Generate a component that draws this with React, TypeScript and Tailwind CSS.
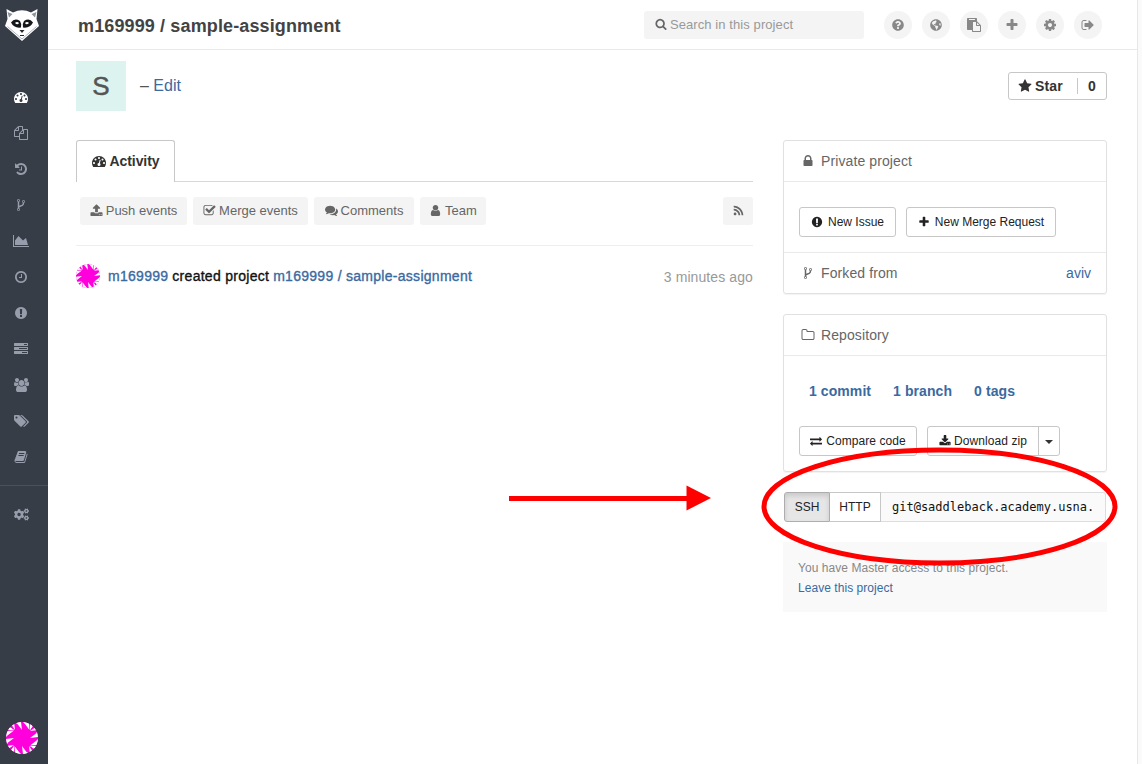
import React from "react";
import { FaCogs, FaGlobeAmericas, FaQuestionCircle, FaRss } from "react-icons/fa";

const PATHS = {
  dashboard:
    "M384 1152q0-53-37.5-90.5t-90.5-37.5-90.5 37.5-37.5 90.5 37.5 90.5 90.5 37.5 90.5-37.5 37.5-90.5zm192-448q0-53-37.5-90.5t-90.5-37.5-90.5 37.5-37.5 90.5 37.5 90.5 90.5 37.5 90.5-37.5 37.5-90.5zm428 481l101-382q6-26-7.5-48.5t-38.5-29.5-48 6.5-30 39.5l-101 382q-60 5-107 43.5t-63 98.5q-20 77 20 146t117 89 146-20 89-117q16-60-6-117t-72-91zm660-33q0-53-37.5-90.5t-90.5-37.5-90.5 37.5-37.5 90.5 37.5 90.5 90.5 37.5 90.5-37.5 37.5-90.5zm-640-640q0-53-37.5-90.5t-90.5-37.5-90.5 37.5-37.5 90.5 37.5 90.5 90.5 37.5 90.5-37.5 37.5-90.5zm448 192q0-53-37.5-90.5t-90.5-37.5-90.5 37.5-37.5 90.5 37.5 90.5 90.5 37.5 90.5-37.5 37.5-90.5zm320 448q0 261-141 483-19 29-54 29h-1402q-35 0-54-29-141-221-141-483 0-182 71-348t191-286 286-191 348-71 348 71 286 191 191 286 71 348z",
  files:
    "M1696 384q40 0 68 28t28 68v1216q0 40-28 68t-68 28h-960q-40 0-68-28t-28-68v-288h-544q-40 0-68-28t-28-68v-672q0-40 20-88t48-76l408-408q28-28 76-48t88-20h416q40 0 68 28t28 68v328q68-40 128-40h416zm-544 213l-299 299h299v-299zm-640-384l-299 299h299v-299zm196 647l316-316v-416h-384v416q0 40-28 68t-68 28h-416v640h512v-256q0-40 20-88t48-76zm956 804v-1152h-384v416q0 40-28 68t-68 28h-416v640h896z",
  history:
    "M1664 896q0 156-61 298t-164 245-245 164-298 61q-172 0-327-72.5t-264-204.5q-7-10-6.5-22.5t8.5-20.5l137-138q10-9 25-9 16 2 23 12 73 95 179 147t225 52q104 0 198.5-40.5t163.5-109.5 109.5-163.5 40.5-198.5-40.5-198.5-109.5-163.5-163.5-109.5-198.5-40.5q-98 0-188 35.5t-160 101.5l137 138q31 30 14 69-17 40-59 40h-448q-26 0-45-19t-19-45v-448q0-42 40-59 39-17 69 14l130 129q107-101 244.5-156.5t284.5-55.5q156 0 298 61t245 164 164 245 61 298zm-640-288v448q0 14-9 23t-23 9h-320q-14 0-23-9t-9-23v-64q0-14 9-23t23-9h224v-352q0-14 9-23t23-9h64q14 0 23 9t9 23z",
  fork: "M672 1472q0-40-28-68t-68-28-68 28-28 68 28 68 68 28 68-28 28-68zm0-1152q0-40-28-68t-68-28-68 28-28 68 28 68 68 28 68-28 28-68zm640 128q0-40-28-68t-68-28-68 28-28 68 28 68 68 28 68-28 28-68zm96 0q0 52-26 96.5t-70 69.5q-2 287-226 414-67 38-203 81-128 40-169.5 71t-41.5 100v26q44 25 70 69.5t26 96.5q0 80-56 136t-136 56-136-56-56-136q0-52 26-96.5t70-69.5v-820q-44-25-70-69.5t-26-96.5q0-80 56-136t136-56 136 56 56 136q0 52-26 96.5t-70 69.5v497q54-26 154-57 55-17 87.5-29.5t70.5-31 59-39.5 40.5-51 28-69.5 8.5-91.5q-44-25-70-69.5t-26-96.5q0-80 56-136t136-56 136 56 56 136z",
  area: "M2048 1536v128h-2048v-1536h128v1408h1920zm-384-1024l256 896h-1664v-576l448-576 576 576z",
  clock:
    "M1024 544v448q0 14-9 23t-23 9h-320q-14 0-23-9t-9-23v-64q0-14 9-23t23-9h224v-352q0-14 9-23t23-9h64q14 0 23 9t9 23zm416 352q0-148-73-273t-198-198-273-73-273 73-198 198-73 273 73 273 198 198 273 73 273-73 198-198 73-273zm224 0q0 209-103 385.5t-279.5 279.5-385.5 103-385.5-103-279.5-279.5-103-385.5 103-385.5 279.5-279.5 385.5-103 385.5 103 279.5 279.5 103 385.5z",
  issue:
    "M896 128q209 0 385.5 103t279.5 279.5 103 385.5-103 385.5-279.5 279.5-385.5 103-385.5-103-279.5-279.5-103-385.5 103-385.5 279.5-279.5 385.5-103zm128 1247v-190q0-14-9-23.5t-22-9.5h-192q-13 0-23 10t-10 23v190q0 13 10 23t23 10h192q13 0 22-9.5t9-23.5zm-2-344l18-621q0-12-10-18-10-8-24-8h-220q-14 0-24 8-10 6-10 18l17 621q0 10 10 17.5t24 7.5h185q14 0 23.5-7.5t10.5-17.5z",
  tasks:
    "M1024 1408h640v-128h-640v128zm-384-512h1024v-128h-1024v128zm640-512h384v-128h-384v128zm512 832v256q0 26-19 45t-45 19h-1664q-26 0-45-19t-19-45v-256q0-26 19-45t45-19h1664q26 0 45 19t19 45zm0-512v256q0 26-19 45t-45 19h-1664q-26 0-45-19t-19-45v-256q0-26 19-45t45-19h1664q26 0 45 19t19 45zm0-512v256q0 26-19 45t-45 19h-1664q-26 0-45-19t-19-45v-256q0-26 19-45t45-19h1664q26 0 45 19t19 45z",
  users:
    "M593 896q-162 5-265 128h-134q-82 0-138-40.5t-56-118.5q0-353 124-353 6 0 43.5 21t97.5 42.5 119 21.5q67 0 133-23-5 37-5 66 0 159 93 297zm1071 637q0 120-73 189.5t-194 69.5h-874q-121 0-194-69.5t-73-189.5q0-53 3.5-103.5t14-109 26.5-108.5 43-97.5 62-81 85.5-53.5 111.5-20q10 0 43 21.5t73 48 107 48 135 21.5 135-21.5 107-48 73-48 43-21.5q61 0 111.5 20t85.5 53.5 62 81 43 97.5 26.5 108.5 14 109 3.5 103.5zm-1024-1277q0 106-75 181t-181 75-181-75-75-181 75-181 181-75 181 75 75 181zm704 384q0 159-112.5 271.5t-271.5 112.5-271.5-112.5-112.5-271.5 112.5-271.5 271.5-112.5 271.5 112.5 112.5 271.5zm576 225q0 78-56 118.5t-138 40.5h-134q-103-123-265-128 93-138 93-297 0-29-5-66 66 23 133 23 59 0 119-21.5t97.5-42.5 43.5-21q124 0 124 353zm-128-609q0 106-75 181t-181 75-181-75-75-181 75-181 181-75 181 75 75 181z",
  tags: "M448 448q0-53-37.5-90.5t-90.5-37.5-90.5 37.5-37.5 90.5 37.5 90.5 90.5 37.5 90.5-37.5 37.5-90.5zm1067 576q0 53-37 90l-491 492q-39 37-91 37-53 0-90-37l-715-716q-38-37-64.5-101t-26.5-117v-416q0-52 38-90t90-38h416q53 0 117 26.5t102 64.5l715 714q37 39 37 91zm384 0q0 53-37 90l-491 492q-39 37-91 37-36 0-59-14t-53-45l470-470q37-37 37-90 0-52-37-91l-715-714q-38-38-102-64.5t-117-26.5h224q53 0 117 26.5t102 64.5l715 714q37 39 37 91z",
  book: "M1703 478q40 57 18 129l-275 906q-19 64-76.5 107.5t-122.5 43.5h-923q-77 0-148.5-53.5t-99.5-131.5q-24-67-2-127 0-4 3-27t4-37q1-8-3-21.5t-3-19.5q2-11 8-21t16.5-23.5 16.5-23.5q23-38 45-91.5t30-91.5q3-10 .5-30t-.5-28q3-11 17-28t17-23q21-36 42-92t25-90q1-9-2.5-32t.5-28q4-13 22-30.5t22-22.5q19-26 42.5-84.5t27.5-96.5q1-8-3-25.5t-2-26.5q2-8 9-18t18-23 17-21q8-12 16.5-30.5t15-35 16-36 19.5-32 26.5-23.5 36-11.5 47.5 5.5l-1 3q38-9 51-9h761q74 0 114 56t18 130l-274 906q-36 119-71.5 153.5t-128.5 34.5h-869q-27 0-38 15-11 16-1 43 24 70 144 70h923q29 0 56-15.5t35-41.5l300-987q7-22 5-57 38 15 59 43zm-1064 2q-4 13 2 22.5t20 9.5h608q13 0 25.5-9.5t16.5-22.5l21-64q4-13-2-22.5t-20-9.5h-608q-13 0-25.5 9.5t-16.5 22.5zm-83 256q-4 13 2 22.5t20 9.5h608q13 0 25.5-9.5t16.5-22.5l21-64q4-13-2-22.5t-20-9.5h-608q-13 0-25.5 9.5t-16.5 22.5z",
  paste:
    "M768 1664h896v-640h-416q-40 0-68-28t-28-68v-416h-384v1152zm256-1440v-64q0-13-9.5-22.5t-22.5-9.5h-704q-13 0-22.5 9.5t-9.5 22.5v64q0 13 9.5 22.5t22.5 9.5h704q13 0 22.5-9.5t9.5-22.5zm256 672h299l-299-299v299zm512 128v672q0 40-28 68t-68 28h-960q-40 0-68-28t-28-68v-160h-544q-40 0-68-28t-28-68v-1344q0-40 28-68t68-28h1088q40 0 68 28t28 68v328q21 13 36 28l408 408q28 28 48 76t20 88z",
  plus: "M1600 736v192q0 40-28 68t-68 28h-416v416q0 40-28 68t-68 28h-192q-40 0-68-28t-28-68v-416h-416q-40 0-68-28t-28-68v-192q0-40 28-68t68-28h416v-416q0-40 28-68t68-28h192q40 0 68 28t28 68v416h416q40 0 68 28t28 68z",
  cog: "M1152 896q0-106-75-181t-181-75-181 75-75 181 75 181 181 75 181-75 75-181zm512-109v222q0 12-8 23t-20 13l-185 28q-19 54-39 91 35 50 107 138 10 12 10 25t-9 23q-27 37-99 108t-94 71q-12 0-26-9l-138-108q-44 23-91 38-16 136-29 186-7 28-36 28h-222q-14 0-24.5-8.5t-11.5-21.5l-28-184q-49-16-90-37l-141 107q-10 9-25 9-14 0-25-11-126-114-165-168-7-10-7-23 0-12 8-23 15-21 51-66.5t54-70.5q-27-50-41-99l-183-27q-13-2-21-12.5t-8-23.5v-222q0-12 8-23t19-13l186-28q14-46 39-92-40-57-107-138-10-12-10-24 0-10 9-23 26-36 98.5-107.5t94.5-71.5q13 0 26 10l138 107q44-23 91-38 16-136 29-186 7-28 36-28h222q14 0 24.5 8.5t11.5 21.5l28 184q49 16 90 37l142-107q9-9 24-9 13 0 25 10 129 119 165 170 7 8 7 22 0 12-8 23-15 21-51 66.5t-54 70.5q26 50 41 98l183 28q13 2 21 12.5t8 23.5z",
  signout:
    "M704 1440q0 4 1 20t.5 26.5-3 23.5-10 19.5-20.5 6.5h-320q-119 0-203.5-84.5t-84.5-203.5v-704q0-119 84.5-203.5t203.5-84.5h320q13 0 22.5 9.5t9.5 22.5q0 4 1 20t.5 26.5-3 23.5-10 19.5-20.5 6.5h-320q-66 0-113 47t-47 113v704q0 66 47 113t113 47h312l11.5 1 11.5 3 8 5.5 7 9 2 13.5zm928-544q0 26-19 45l-544 544q-19 19-45 19t-45-19-19-45v-288h-448q-26 0-45-19t-19-45v-384q0-26 19-45t45-19h448v-288q0-26 19-45t45-19 45 19l544 544q19 19 19 45z",
  search:
    "M1216 832q0-185-131.5-316.5t-316.5-131.5-316.5 131.5-131.5 316.5 131.5 316.5 316.5 131.5 316.5-131.5 131.5-316.5zm512 832q0 52-38 90t-90 38q-54 0-90-38l-343-342q-179 124-399 124-143 0-273.5-55.5t-225-150-150-225-55.5-273.5 55.5-273.5 150-225 225-150 273.5-55.5 273.5 55.5 225 150 150 225 55.5 273.5q0 220-124 399l343 343q37 37 37 90z",
  star: "M1728 647q0 22-26 48l-363 354 86 500q1 7 1 20 0 21-10.5 35.5t-30.5 14.5q-19 0-40-12l-449-236-449 236q-22 12-40 12-21 0-31.5-14.5t-10.5-35.5q0-6 2-20l86-500-364-354q-25-27-25-48 0-37 56-46l502-73 225-455q19-41 49-41t49 41l225 455 502 73q56 9 56 46z",
  upload:
    "M1344 1472q0-26-19-45t-45-19-45 19-19 45 19 45 45 19 45-19 19-45zm256 0q0-26-19-45t-45-19-45 19-19 45 19 45 45 19 45-19 19-45zm128-224v320q0 40-28 68t-68 28h-1472q-40 0-68-28t-28-68v-320q0-40 28-68t68-28h427q21 56 70.5 92t110.5 36h256q61 0 110.5-36t70.5-92h427q40 0 68 28t28 68zm-325-648q-17 40-59 40h-256v448q0 26-19 45t-45 19h-256q-26 0-45-19t-19-45v-448h-256q-42 0-59-40-17-39 14-69l448-448q18-19 45-19t45 19l448 448q31 30 14 69z",
  download:
    "M1344 1344q0-26-19-45t-45-19-45 19-19 45 19 45 45 19 45-19 19-45zm256 0q0-26-19-45t-45-19-45 19-19 45 19 45 45 19 45-19 19-45zm128-224v320q0 40-28 68t-68 28h-1472q-40 0-68-28t-28-68v-320q0-40 28-68t68-28h465l135 136q58 56 136 56t136-56l136-136h464q40 0 68 28t28 68zm-325-569q17 41-14 70l-448 448q-18 19-45 19t-45-19l-448-448q-31-29-14-70 17-39 59-39h256v-448q0-26 19-45t45-19h256q26 0 45 19t19 45v448h256q42 0 59 39z",
  check:
    "M1472 930v318q0 119-84.5 203.5t-203.5 84.5h-832q-119 0-203.5-84.5t-84.5-203.5v-832q0-119 84.5-203.5t203.5-84.5h832q63 0 117 25 15 7 18 23 3 17-9 29l-49 49q-10 10-23 10-3 0-9-2-23-6-45-6h-832q-66 0-113 47t-47 113v832q0 66 47 113t113 47h832q66 0 113-47t47-113v-254q0-13 9-22l64-64q10-10 23-10 6 0 12 3 20 8 20 29zm231-489l-814 814q-24 24-57 24t-57-24l-430-430q-24-24-24-57t24-57l110-110q24-24 57-24t57 24l263 263 647-647q24-24 57-24t57 24l110 110q24 24 24 57t-24 57z",
  comments:
    "M1408 768q0 139-94 257t-256.5 186.5-353.5 68.5q-86 0-176-16-124 88-278 128-36 9-86 16h-3q-11 0-20.5-8t-11.5-21q-1-3-1-6.5t.5-6.5 2-6l2.5-5 3.5-5.5 4-5 4.5-5 4-4.5q5-6 23-25t26-29.5 22.5-29 25-38.5 20.5-44q-124-72-195-177t-71-224q0-139 94-257t256.5-186.5 353.5-68.5 353.5 68.5 256.5 186.5 94 257zm384 256q0 120-71 224.5t-195 176.5q10 24 20.5 44t25 38.5 22.5 29 26 29.5 23 25q1 1 4 4.5t4.5 5 4 5 3.5 5.5l2.5 5 2 6 .5 6.5-1 6.5q-3 14-13 22t-22 7q-50-7-86-16-154-40-278-128-90 16-176 16-271 0-472-132 58 4 88 4 161 0 309-45t264-129q125-92 192-212t67-254q0-77-23-152 129 71 204 178t75 230z",
  user: "M1536 1399q0 109-62.5 187t-150.5 78h-854q-88 0-150.5-78t-62.5-187q0-85 8.5-160.5t31.5-152 58.5-131 94-89 134.5-34.5q131 128 313 128t313-128q76 0 134.5 34.5t94 89 58.5 131 31.5 152 8.5 160.5zm-256-887q0 159-112.5 271.5t-271.5 112.5-271.5-112.5-112.5-271.5 112.5-271.5 271.5-112.5 271.5 112.5 112.5 271.5z",
  lock: "M640 768h512v-192q0-106-75-181t-181-75-181 75-75 181v192zm832 96v576q0 40-28 68t-68 28h-960q-40 0-68-28t-28-68v-576q0-40 28-68t68-28h32v-192q0-184 132-316t316-132 316 132 132 316v192h32q40 0 68 28t28 68z",
  folder:
    "M1600 1312v-704q0-40-28-68t-68-28h-704q-40 0-68-28t-28-68v-64q0-40-28-68t-68-28h-320q-40 0-68 28t-28 68v960q0 40 28 68t68 28h1216q40 0 68-28t28-68zm128-704v704q0 92-66 158t-158 66h-1216q-92 0-158-66t-66-158v-960q0-92 66-158t158-66h320q92 0 158 66t66 158v32h672q92 0 158 66t66 158z",
  exchange:
    "M1792 1184v192q0 13-9.5 22.5t-22.5 9.5h-1376v192q0 13-9.5 22.5t-22.5 9.5q-12 0-24-10l-319-320q-9-9-9-22 0-14 9-23l320-320q9-9 23-9 13 0 22.5 9.5t9.5 22.5v192h1376q13 0 22.5 9.5t9.5 22.5zm0-544q0 14-9 23l-320 320q-9 9-23 9-13 0-22.5-9.5t-9.5-22.5v-192h-1376q-13 0-22.5-9.5t-9.5-22.5v-192q0-13 9.5-22.5t22.5-9.5h1376v-192q0-14 9-23t23-9q12 0 24 10l319 319q9 9 9 23z",
};

type IconName = keyof typeof PATHS;

function Icon({ name, size = 14, className = "" }: { name: IconName; size?: number; className?: string }) {
  const unit = name === "area" ? 2048 : name === "users" || name === "tags" ? 1920 : 1792;
  return (
    <svg
      width={(size * unit) / 1792}
      height={size}
      viewBox={`0 0 ${unit} 1792`}
      fill="currentColor"
      className={`shrink-0 ${className}`}
    >
      <path d={PATHS[name]} />
    </svg>
  );
}

function Logo() {
  return (
    <svg width="36" height="34" viewBox="0 0 36 34" className="shrink-0">
      <path d="M2.5 1 3.5 11 1 18 18 33 35 18 32.5 11 33.5 1 27 4.5Q18 0 9 4.5Z" fill="#fff" />
      <path d="M3.5 4 5 9.5 8.5 6ZM32.5 4 31 9.5 27.5 6Z" fill="#8d939b" />
      <path d="M7 14.5q3.5-5 9-1.5 2 3 1 6.500-7 1-10-5zM29 14.500q-3.500-5-9-1.500-2 3-1 6.500 7 1 10-5z" fill="#15171b" />
      <path d="M11 15q2-2 4 0-1.500 2.500-4 0zM25 15q-2-2-4 0 1.500 2.500 4 0z" fill="#fff" />
      <path d="M15.500 22h5L18 25ZM16 27h4v1h-4z" fill="#24272c" />
      <path d="M3.500 18.500 18 31 32.500 18.500" stroke="#8d939b" strokeWidth=".7" fill="none" />
    </svg>
  );
}

function Identicon({ size, spike = "#fff" }: { size: number; spike?: string }) {
  return (
    <svg width={size} height={size} viewBox="0 0 32 32" className="shrink-0 rounded-full">
      <rect width="32" height="32" fill="#ff00dc" />
      {[0, 90, 180, 270].map((angle) => (
        <path
          key={angle}
          transform={`rotate(${angle} 16 16)`}
          fill={spike}
          d="M0 0H8L9 8 5 2ZM8 0H15L16 8 11.500 2ZM17 0H23L23.500 8 19 2ZM1 4 8 8 0 7ZM24 1H29L24 8Z"
        />
      ))}
    </svg>
  );
}

const NAV: IconName[] = ["dashboard", "files", "history", "fork", "area", "clock", "issue", "tasks", "users", "tags", "book"];

function Sidebar() {
  return (
    <aside className="flex w-12 shrink-0 flex-col bg-[#373d47] text-[#979dab]">
      <div className="flex h-[79px] pt-2 pl-1">
        <Logo />
      </div>
      {NAV.map((name, i) => (
        <div key={name} className={`flex h-9 w-[42px] items-center justify-center ${i === 0 ? "text-white" : ""}`}>
          <Icon name={name} />
        </div>
      ))}
      <div className="mt-[10px] border-t border-[#4a505c]" />
      <div className="mt-[10px] flex h-9 w-[42px] items-center justify-center">
        <FaCogs size={15} />
      </div>
      <div className="mt-auto mb-[10px] ml-[6px]">
        <Identicon size={32} />
      </div>
    </aside>
  );
}

function Header() {
  return (
    <header className="flex h-[50px] items-center border-b border-[#eaeaea] pr-[35px] pl-[30px]">
      <h1 className="flex-1 pt-[3px] text-[18px] font-bold tracking-[0.13px] text-[#434343]">m169999 / sample-assignment</h1>
      <div className="flex h-7 w-[220px] items-center rounded-[3px] bg-[#f4f4f4] pl-[11px] text-[#666]">
        <Icon name="search" size={12} className="mb-px" />
        <span className="ml-[3px] text-[13px] tracking-[0.08px] text-[#999]">Search in this project</span>
      </div>
      <nav className="ml-5 flex gap-[10px] text-[#888]">
        <HeaderButton><FaQuestionCircle size={12} /></HeaderButton>
        <HeaderButton><FaGlobeAmericas size={12} /></HeaderButton>
        <HeaderButton><Icon name="paste" /></HeaderButton>
        <HeaderButton><Icon name="plus" /></HeaderButton>
        <HeaderButton><Icon name="cog" /></HeaderButton>
        <HeaderButton><Icon name="signout" /></HeaderButton>
      </nav>
    </header>
  );
}

function HeaderButton({ children }: { children: React.ReactNode }) {
  return <button className="flex size-7 items-center justify-center rounded-full bg-[#f4f4f4]">{children}</button>;
}

function Filter({ icon, label, width }: { icon: IconName; label: string; width: string }) {
  return (
    <button className={`flex h-7 items-center justify-center gap-[3px] rounded-[3px] bg-[#f4f4f4] text-[13px] text-[#666] ${width}`}>
      <Icon name={icon} size={13} className="mb-px" />
      {label}
    </button>
  );
}

function Activity() {
  return (
    <section className="w-[677px]">
      <div className="flex h-[42px]">
        <div className="flex w-[99px] items-center justify-center gap-1 rounded-t-[3px] border border-b-0 border-[#c8c8c8] text-[14px] font-bold text-[#333]">
          <Icon name="dashboard" className="mb-px" />
          <span className="tracking-[-0.1px]">Activity</span>
        </div>
        <div className="flex-1 border-b border-[#d8d8d8]" />
      </div>
      <div className="mt-[15px] flex gap-[6px] pl-1">
        <Filter icon="upload" label="Push events" width="w-[107px]" />
        <Filter icon="check" label="Merge events" width="w-[115px]" />
        <Filter icon="comments" label="Comments" width="w-[100px]" />
        <Filter icon="user" label="Team" width="w-[66px]" />
        <button className="ml-auto flex h-7 w-[30px] items-center justify-center rounded-[3px] bg-[#f4f4f4] pb-px text-[#666]">
          <FaRss size={11} />
        </button>
      </div>
      <div className="mt-5 border-t border-[#eee]" />
      <div className="mt-[18px] flex h-6 items-center text-[14px] text-[#3a6a9f]">
        <Identicon size={24} />
        <p className="ml-2 flex gap-1 whitespace-nowrap tracking-[0.28px] [-webkit-text-stroke:0.35px_currentColor]">
          <a>m169999</a>
          <span className="text-[#111]">created project</span>
          <a>m169999 / sample-assignment</a>
        </p>
        <time className="mt-[2px] ml-auto tracking-[0.1px] text-[#999]">3 minutes ago</time>
      </div>
    </section>
  );
}

function Button({ children, width }: { children: React.ReactNode; width: string }) {
  return (
    <button className={`flex h-[30px] items-center justify-center rounded-[3px] border border-[#c7c7c7] bg-white text-[12px] text-[#222] ${width}`}>
      {children}
    </button>
  );
}

function Aside() {
  return (
    <aside className="w-[324px] text-[14px]">
      <div className="h-[154px] rounded-[3px] border border-[#e1e1e1] shadow-[0_1px_1px_rgba(0,0,0,0.05)]">
        <div className="flex h-[41px] items-center border-b border-[#eaeaea] pl-[17px] text-[#666]">
          <Icon name="lock" />
          <span className="ml-[6px] tracking-[0.1px]">Private project</span>
        </div>
        <div className="flex h-[71px] gap-[10px] border-b border-[#eaeaea] px-[15px] pt-[25px]">
          <Button width="w-[97px]">
            <Icon name="issue" size={12} />
            <span className="ml-[5px]">New Issue</span>
          </Button>
          <Button width="w-[150px]">
            <Icon name="plus" size={12} />
            <span className="ml-[5px]">New Merge Request</span>
          </Button>
        </div>
        <div className="flex h-10 items-center pr-[15px] pl-[17px] text-[#666]">
          <Icon name="fork" />
          <span className="ml-[6px] tracking-[0.1px]">Forked from</span>
          <a className="ml-auto text-[#3a6a9f]">aviv</a>
        </div>
      </div>

      <div className="mt-5 h-[158px] rounded-[3px] border border-[#e1e1e1] shadow-[0_1px_1px_rgba(0,0,0,0.05)]">
        <div className="flex h-[41px] items-center border-b border-[#eaeaea] pl-[17px] text-[#666]">
          <Icon name="folder" />
          <span className="ml-[6px] tracking-[0.1px]">Repository</span>
        </div>
        <div className="flex h-[70px] items-center gap-[22px] pl-[25px] font-bold tracking-[0.08px] text-[#3a6a9f]">
          <a>1 commit</a>
          <a>1 branch</a>
          <a>0 tags</a>
        </div>
        <div className="flex gap-[10px] pl-[15px]">
          <Button width="w-[118px]">
            <Icon name="exchange" size={12} />
            <span className="ml-[4px] tracking-[0.08px]">Compare code</span>
          </Button>
          <div className="flex h-[30px] w-[133px] rounded-[3px] border border-[#c7c7c7] text-[12px] text-[#222]">
            <button className="flex w-[110px] items-center justify-center">
              <Icon name="download" size={12} />
              <span className="ml-[3px] tracking-[0.08px]">Download zip</span>
            </button>
            <button className="flex flex-1 items-center justify-center border-l border-[#c7c7c7]">
              <svg width="8" height="4" viewBox="0 0 8 4" className="mt-px"><path d="M0 0h8L4 4z" fill="#333" /></svg>
            </button>
          </div>
        </div>
      </div>

      <div className="mt-5 ml-px flex h-[30px] w-[322px] text-[12px] text-[#222]">
        <button className="w-[46px] rounded-l-[3px] border border-[#adadad] bg-[#e6e6e6] shadow-[inset_0_3px_5px_rgba(0,0,0,0.125)]">SSH</button>
        <button className="w-[51px] border-y border-r border-[#c7c7c7] bg-white">HTTP</button>
        <div className="flex flex-1 items-center rounded-r-[3px] border border-l-0 border-[#ddd] bg-[#fafafa] pl-[11px] font-['DejaVu_Sans_Mono',monospace] text-[12px] text-[#111]">
          git@saddleback.academy.usna.
        </div>
      </div>

      <div className="mt-5 h-[70px] bg-[#f9f9f9] px-[15px] pt-[16px] text-[12px] leading-5 text-[#888]">
        <p className="tracking-[0.05px]">You have Master access to this project.</p>
        <a className="block tracking-[0.05px] text-[#3a6a9f]">Leave this project</a>
      </div>
    </aside>
  );
}

function Annotations() {
  return (
    <svg width="1142" height="764" className="pointer-events-none absolute top-0 left-0" fill="none">
      <ellipse cx="939.5" cy="506.5" rx="175.500" ry="56.500" stroke="#f00" strokeWidth="5" />
      <path d="M509 498.500H688" stroke="#f00" strokeWidth="5" />
      <path d="M686.500 485.500 711 498 686.500 510.500Z" fill="#f00" />
    </svg>
  );
}

export default function App() {
  return (
    <div className="relative flex h-[764px] w-[1142px] overflow-hidden bg-white font-['Liberation_Sans',Arial,sans-serif]">
      <Sidebar />
      <div className="flex-1">
        <Header />
        <main className="pr-[30px] pl-7">
          <div className="flex h-[90px] pt-[11px]">
            <div className="flex size-[50px] items-center justify-center bg-[#ddf3f0] text-[26px] text-[#555] [-webkit-text-stroke:0.5px_currentColor]">S</div>
            <p className="mt-[13px] ml-[14px] text-[16px] text-[#555]">
              – <a className="text-[#3a6a9f]">Edit</a>
            </p>
            <button className="mt-[11px] ml-auto flex h-7 w-[99px] items-center rounded-[3px] border border-[#c7c7c7] pl-[9px] text-[14px] font-bold text-[#333]">
              <Icon name="star" />
              <span className="ml-[3px] w-[42px] text-left tracking-[0.15px]">Star</span>
              <span className="flex h-4 flex-1 items-center justify-center border-l border-[#c7c7c7]">0</span>
            </button>
          </div>
          <div className="flex justify-between">
            <Activity />
            <Aside />
          </div>
        </main>
      </div>
      <div className="w-[5px] border-l border-[#e7e7e7] bg-[#fafafa]" />
      <Annotations />
    </div>
  );
}
